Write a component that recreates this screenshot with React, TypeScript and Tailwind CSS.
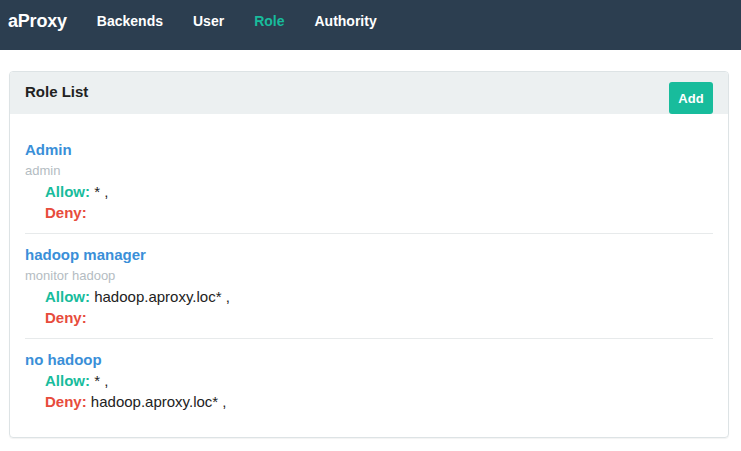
const roles = [
  { name: "Admin", desc: "admin", allow: "* ,", deny: "" },
  { name: "hadoop manager", desc: "monitor hadoop", allow: "hadoop.aproxy.loc* ,", deny: "" },
  { name: "no hadoop", desc: "", allow: "* ,", deny: "hadoop.aproxy.loc* ," },
];

export default function App() {
  return (
    <div className="min-h-[451px] bg-white font-['Liberation_Sans',Arial,sans-serif] text-[15px] leading-[21px] text-[#2c3e50]">
      {/* Navbar */}
      <nav className="flex h-[50px] items-center bg-[#2c3e50] pl-[8px] pb-[8px]">
        <span className="mr-[30px] text-[18px] font-bold tracking-[-0.2px] text-white">aProxy</span>
        <ul className="flex gap-[30px] text-[14px] font-bold">
          <li className="text-white">Backends</li>
          <li className="text-white">User</li>
          <li className="text-[#18bc9c]">Role</li>
          <li className="text-white">Authority</li>
        </ul>
      </nav>

      {/* Panel */}
      <div className="ml-[9px] mt-[21px] w-[720px] rounded-[4px] border border-[#dde3e5] shadow-[0_1px_1px_rgba(0,0,0,0.05)]">
        <div className="flex h-[42px] items-start justify-between rounded-t-[3px] bg-[#ecf0f1] pl-[15px] pr-[15px]">
          <h3 className="pt-[9px] text-[15px] font-bold text-[#222]">Role List</h3>
          <button className="relative z-10 mt-[10px] h-[32px] w-[44px] rounded-[3px] bg-[#18bc9c] text-[13px] font-bold text-white">
            Add
          </button>
        </div>
        <div className="px-[15px] pt-[15px] pb-[15px]">
          {roles.map((r, i) => (
            <div
              key={r.name}
              className={i < roles.length - 1 ? "border-b border-[#e7eaeb] py-[10px]" : "py-[10px]"}
            >
              <div className="font-bold text-[#3a8fd8]">{r.name}</div>
              {r.desc && <div className="text-[13px] text-[#b4bcc2]">{r.desc}</div>}
              <div className="pl-[20px]">
                <div>
                  <span className="font-bold text-[#18bc9c]">Allow:</span>{" "}
                  <span className="text-[#222]">{r.allow}</span>
                </div>
                <div>
                  <span className="font-bold text-[#e74c3c]">Deny:</span>{" "}
                  <span className="text-[#222]">{r.deny}</span>
                </div>
              </div>
            </div>
          ))}
        </div>
      </div>
    </div>
  );
}
